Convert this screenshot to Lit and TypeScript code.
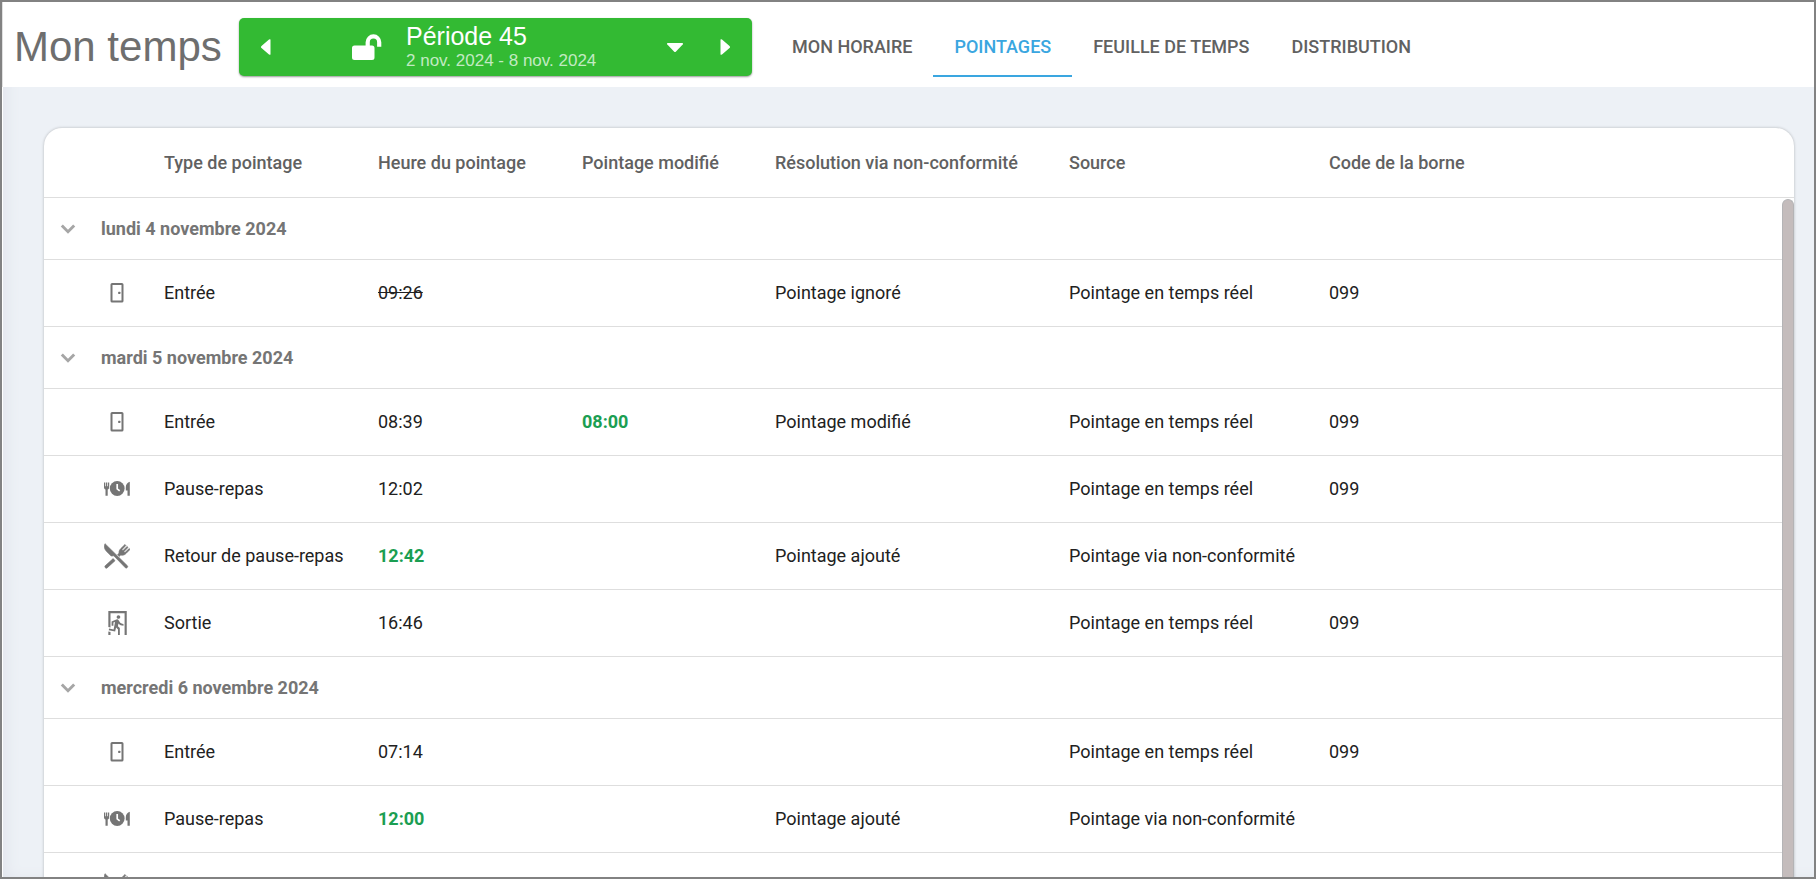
import { LitElement, html, css, svg, nothing, TemplateResult } from "lit";
import { customElement, property } from "lit/decorators.js";

type Kind = "in" | "meal" | "back" | "out";

interface Punch {
  kind: Kind;
  time?: string;
  state?: "ignored" | "added";
  changed?: string;
  resolution?: string;
  source?: string;
  terminal?: string;
}

interface Day {
  label: string;
  punches: Punch[];
}

const REAL_TIME = "Pointage en temps réel";
const VIA_NC = "Pointage via non-conformité";

const LABELS: Record<Kind, string> = {
  in: "Entrée",
  meal: "Pause-repas",
  back: "Retour de pause-repas",
  out: "Sortie",
};

const DAYS: Day[] = [
  {
    label: "lundi 4 novembre 2024",
    punches: [
      { kind: "in", time: "09:26", state: "ignored", resolution: "Pointage ignoré", source: REAL_TIME, terminal: "099" },
    ],
  },
  {
    label: "mardi 5 novembre 2024",
    punches: [
      { kind: "in", time: "08:39", changed: "08:00", resolution: "Pointage modifié", source: REAL_TIME, terminal: "099" },
      { kind: "meal", time: "12:02", source: REAL_TIME, terminal: "099" },
      { kind: "back", time: "12:42", state: "added", resolution: "Pointage ajouté", source: VIA_NC },
      { kind: "out", time: "16:46", source: REAL_TIME, terminal: "099" },
    ],
  },
  {
    label: "mercredi 6 novembre 2024",
    punches: [
      { kind: "in", time: "07:14", source: REAL_TIME, terminal: "099" },
      { kind: "meal", time: "12:00", state: "added", resolution: "Pointage ajouté", source: VIA_NC },
      { kind: "back" },
    ],
  },
];

const ICONS: Record<Kind, TemplateResult> = {
  in: svg`
    <rect x="7.500" y="4" width="11" height="17.500" rx="0.600" fill="none" stroke="currentColor" stroke-width="2" />
    <rect x="14.200" y="11.800" width="2.200" height="2.200" rx="0.500" />`,
  meal: svg`
    <circle cx="13.200" cy="12.500" r="7.400" />
    <path d="M13.200 8v4.900l2.500 2" fill="none" stroke="#fff" stroke-width="1.700" />
    <path d="M0 6.500h1.200v3.700h0.700V6.500h1.400v3.700h0.700V6.500h1.200v4.800c0 1.200-.6 1.900-1.500 2.200v6.300H1.500v-6.300C.6 13.200 0 12.500 0 11.300z" />
    <path d="M25.800 5.800v14h-2.300v-5.400h-1.700v-3.200c0-2.700 1.700-4.700 4-5.400z" />`,
  back: svg`
    <g stroke="currentColor" stroke-width="0.700" stroke-linejoin="round">
      <path d="M1 0.700C-.2 3.400 .3 6 2.600 8.400L7.200 13l2.600-.2L21.400 24.800c1.100 1.100 3-.9 2-2z" />
      <path d="M9.200 15.600l-8 7.200c-1.100 1.100 .8 3.200 1.900 2.100l7.900-7.200z" />
      <path d="M13.600 11.600l1.700 1.700 1.500-1.300c2.200.6 3.700 0 5.200-1.500l4-4.100-.8-.8-4.200 3.900-1-1 4-4.100-.9-.9-4.100 4-1-1 3.900-4.100-.9-.9-4.200 4.100c-1.500 1.500-2 3-1.700 4.600z" />
    </g>`,
  out: svg`
    <g transform="scale(1.0833)">
      <path d="M13.340 8.170C12.410 8.170 11.650 7.400 11.650 6.470A1.690 1.690 0 0 1 13.340 4.780C14.280 4.780 15.040 5.540 15.040 6.470C15.040 7.400 14.280 8.170 13.340 8.170M10.300 19.930L4.370 18.750L4.710 17.050L8.860 17.900L10.210 11.040L8.690 11.640V14.500H7V10.540L11.400 8.670L12.070 8.590C12.670 8.590 13.170 8.930 13.500 9.440L14.360 10.790C15.040 12 16.390 12.820 18 12.820V14.500C16.140 14.500 14.440 13.670 13.340 12.400L12.840 14.940L14.610 16.630V23H12.920V17.900L11.140 16.210L10.300 19.930M21 23H19V3H6V16.110L4 15.690V1H21V23M6 23H4V19.780L6 20.200V23Z" />
    </g>`,
};

@customElement("period-picker")
export class PeriodPicker extends LitElement {
  @property() name = "";
  @property() range = "";

  static styles = css`
    :host {
      display: flex;
      align-items: stretch;
      width: 513px;
      height: 58px;
      border-radius: 5px;
      background: #33ba33;
      box-shadow: 0 1px 2px rgba(0, 0, 0, 0.4);
      color: #fff;
      font-family: "Liberation Sans", Arial, sans-serif;
    }
    button {
      display: flex;
      align-items: center;
      margin: 0;
      padding: 0;
      border: 0;
      background: none;
      color: inherit;
      font: inherit;
      text-align: left;
      cursor: pointer;
    }
    svg {
      display: block;
      fill: currentColor;
    }
    .step {
      justify-content: center;
      width: 54px;
    }
    .current {
      flex: 1;
      padding: 0 15px 0 59px;
    }
    .lock {
      margin-right: 24px;
    }
    .text {
      flex: 1;
      display: flex;
      flex-direction: column;
    }
    .name {
      font-size: 25px;
      line-height: 27px;
    }
    .range {
      font-size: 17px;
      line-height: 21px;
      color: #c2eac2;
    }
  `;

  render() {
    return html`
      <button class="step" aria-label="Période précédente">
        <svg width="10" height="16" viewBox="0 0 10 16"><path d="M9.500.600v14.800q-.5.600-1.500.2L.5 8.900a1.200 1.200 0 0 1 0-1.800L8 .4q1-.4 1.500.2z" /></svg>
      </button>
      <button class="current">
        <svg class="lock" width="30" height="27" viewBox="0 0 30 27">
          <path d="M2.500 11.500H20a2.500 2.500 0 0 1 2.500 2.500v9.500A2.500 2.500 0 0 1 20 26H2.500A2.500 2.500 0 0 1 0 23.500V14a2.500 2.500 0 0 1 2.500-2.500z" />
          <path d="M15.700 12.500V8.200a5.700 5.700 0 0 1 11.500 0v4.500" fill="none" stroke="currentColor" stroke-width="4.200" stroke-linecap="butt" />
        </svg>
        <span class="text">
          <span class="name">${this.name}</span>
          <span class="range">${this.range}</span>
        </span>
        <svg width="16" height="9" viewBox="0 0 16 9"><path d="M.6 0h14.800q1 .4.300 1.400L9 8.400a1.400 1.400 0 0 1-2 0L.3 1.400Q-.4.400.6 0z" /></svg>
      </button>
      <button class="step" aria-label="Période suivante">
        <svg width="10" height="16" viewBox="0 0 10 16"><path d="M.5.600Q1 0 2 .4l7.500 6.700a1.200 1.200 0 0 1 0 1.800L2 15.600q-1 .4-1.500-.2z" /></svg>
      </button>
    `;
  }
}

@customElement("punch-table")
export class PunchTable extends LitElement {
  static styles = css`
    :host {
      display: block;
      position: relative;
      overflow: hidden;
      border-radius: 18px 18px 0 0;
      background: #fff;
      box-shadow: 0 0 3px rgba(0, 0, 0, 0.25);
      color: #212121;
      font-size: 18px;
      line-height: 24px;
    }
    table {
      width: 100%;
      table-layout: fixed;
      border-collapse: separate;
      border-spacing: 0;
    }
    .c-icon { width: 100px; }
    .c-type { width: 214px; }
    .c-time { width: 204px; }
    .c-changed { width: 193px; }
    .c-resolution { width: 294px; }
    .c-source { width: 260px; }
    th,
    td {
      box-sizing: border-box;
      padding: 0 20px;
      border-bottom: 1px solid #dedede;
      text-align: left;
      white-space: nowrap;
    }
    thead th {
      height: 70px;
      color: #616161;
      font-weight: 500;
    }
    td {
      height: 67px;
    }
    .day {
      height: 62px;
      padding: 0 10px;
      color: #757575;
      font-weight: 700;
    }
    .toggle {
      display: flex;
      align-items: center;
      gap: 19px;
      margin: 0;
      padding: 0;
      border: 0;
      background: none;
      color: inherit;
      font: inherit;
      cursor: pointer;
    }
    .chevron {
      fill: #a6a6a6;
    }
    .icon {
      padding: 0 14px 0 60px;
      color: #757575;
    }
    svg {
      display: block;
      fill: currentColor;
    }
    .ignored {
      text-decoration: line-through;
    }
    .green {
      color: #1b9e52;
      font-weight: 700;
    }
    .thumb {
      position: absolute;
      top: 71px;
      right: 0;
      bottom: 0;
      box-sizing: border-box;
      width: 12px;
      border: 1px solid #b4b4b6;
      border-bottom: 0;
      border-radius: 6px 6px 0 0;
      background: #c4bcbc;
    }
  `;

  private row(p: Punch) {
    const timeClass = p.state === "ignored" ? "ignored" : p.state === "added" ? "green" : "";
    return html`
      <tr>
        <td class="icon"><svg width="26" height="26" viewBox="0 0 26 26" aria-hidden="true">${ICONS[p.kind]}</svg></td>
        <td>${LABELS[p.kind]}</td>
        <td><span class=${timeClass}>${p.time ?? nothing}</span></td>
        <td class="green">${p.changed ?? nothing}</td>
        <td>${p.resolution ?? nothing}</td>
        <td>${p.source ?? nothing}</td>
        <td>${p.terminal ?? nothing}</td>
      </tr>
    `;
  }

  render() {
    return html`
      <table>
        <colgroup>
          <col class="c-icon" />
          <col class="c-type" />
          <col class="c-time" />
          <col class="c-changed" />
          <col class="c-resolution" />
          <col class="c-source" />
          <col />
        </colgroup>
        <thead>
          <tr>
            <th></th>
            <th scope="col">Type de pointage</th>
            <th scope="col">Heure du pointage</th>
            <th scope="col">Pointage modifié</th>
            <th scope="col">Résolution via non-conformité</th>
            <th scope="col">Source</th>
            <th scope="col">Code de la borne</th>
          </tr>
        </thead>
        ${DAYS.map(
          (d) => html`
            <tbody>
              <tr>
                <th class="day" colspan="7" scope="rowgroup">
                  <button class="toggle" aria-expanded="true">
                    <svg class="chevron" width="28" height="28" viewBox="0 0 24 24"><path d="M16.400 8.200L12 12.600 7.600 8.200 5.800 9.900l6.200 6.200 6.200-6.200z" /></svg>
                    ${d.label}
                  </button>
                </th>
              </tr>
              ${d.punches.map((p) => this.row(p))}
            </tbody>
          `
        )}
      </table>
      <div class="thumb"></div>
    `;
  }
}

@customElement("app-root")
export class AppRoot extends LitElement {
  static styles = css`
    :host {
      display: flex;
      flex-direction: column;
      box-sizing: border-box;
      height: 100vh;
      overflow: hidden;
      border: 2px solid #828282;
      background: #fff;
      font-family: Roboto, sans-serif;
    }
    header {
      display: flex;
      align-items: center;
      flex: none;
      height: 85px;
      padding: 5px 11px 0;
      box-sizing: border-box;
      border-left: 1px solid #e0e0e0;
    }
    h1 {
      margin: 0;
      width: 225px;
      color: #6e6e6e;
      font: 400 42px/48px "Liberation Sans", Arial, sans-serif;
    }
    nav {
      display: flex;
      margin-left: 19px;
    }
    nav a {
      padding: 2px 21px 0;
      border-bottom: 2px solid transparent;
      color: #616161;
      font-size: 18px;
      font-weight: 500;
      line-height: 56px;
      text-decoration: none;
      text-transform: uppercase;
    }
    nav a.active {
      border-color: #3aa6e0;
      color: #3aa6e0;
    }
    main {
      flex: 1;
      min-height: 0;
      overflow: hidden;
      margin-left: 1px;
      padding: 41px 20px 0 41px;
      background: #edf1f6;
      box-shadow: inset 12px -6px 14px -8px #e2e5ec;
    }
  `;

  render() {
    return html`
      <header>
        <h1>Mon temps</h1>
        <period-picker name="Période 45" range="2 nov. 2024 - 8 nov. 2024"></period-picker>
        <nav>
          <a href="#horaire">Mon horaire</a>
          <a href="#pointages" class="active" aria-current="page">Pointages</a>
          <a href="#feuille">Feuille de temps</a>
          <a href="#distribution">Distribution</a>
        </nav>
      </header>
      <main>
        <punch-table></punch-table>
      </main>
    `;
  }
}
